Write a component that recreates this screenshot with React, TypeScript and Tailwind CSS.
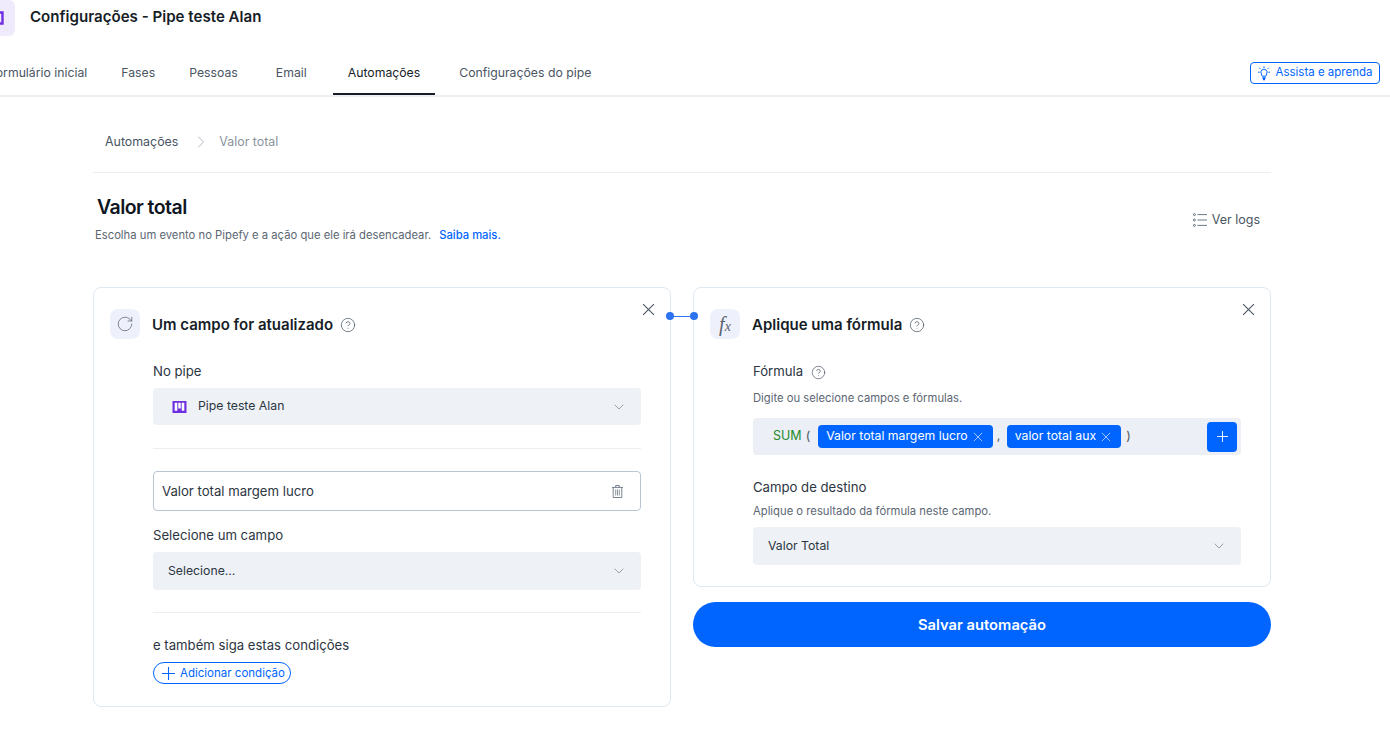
import { ChevronDown, ChevronRight, CircleHelp, RotateCw } from "lucide-react";

const tabs = [
  { label: "Formulário inicial", className: "px-[15px] mr-[4px]" },
  { label: "Fases", className: "px-[15px] mr-[4px]" },
  { label: "Pessoas", className: "px-[15px] mr-[8px]" },
  { label: "Email", className: "px-[15px] mr-[11px]" },
  { label: "Automações", className: "px-[15px] mr-[9px] text-[#161d27] border-b-2 border-[#161d27]" },
  { label: "Configurações do pipe", className: "px-[15px]" },
];

function PipeGlyph({ className }: { className: string }) {
  return (
    <svg viewBox="0 0 14 12" className={className}>
      <path fill="#6f2fe0" d="M0 0h14v12H0z" />
      <path fill="#fff" d="M2.2 1.8h2.6v8H2.2zM5.8 1.8h2.4v5.6H5.8zM9.2 1.8h2.6v8H9.2z" />
    </svg>
  );
}

function LogsIcon() {
  return (
    <svg viewBox="0 0 14 14" className="w-[14px] h-[14px] text-[#4a5563]" fill="none" stroke="currentColor" strokeWidth="0.8">
      <circle cx="1.4" cy="1.6" r="1" />
      <circle cx="1.4" cy="7" r="1" />
      <circle cx="1.4" cy="12.4" r="1" />
      <path d="M4.5 1.6H14M4.5 7H14M4.5 12.4H14" />
    </svg>
  );
}

function BulbIcon() {
  return (
    <svg viewBox="0 0 14 15" className="w-[14px] h-[15px] mr-[4px]" fill="none" stroke="currentColor" strokeWidth="1">
      <path d="M5.2 10.2 4.4 8a3.1 3.1 0 1 1 5.2 0L8.8 10.2Z" />
      <path d="M5.4 11.9h3.2M6 13.6h2" strokeWidth="1.5" />
      <path d="M7 .4v1.6M2.3 1.8l1.1 1.1M11.7 1.8l-1.1 1.1M1 6.2h1.6M11.4 6.2H13" />
    </svg>
  );
}

function TrashIcon() {
  return (
    <svg viewBox="0 0 11 13" className="w-[11px] h-[13px] text-[#6b7683]" fill="none" stroke="currentColor" strokeWidth="0.9">
      <path d="M0 2.4h11M3.7 2.4V.5h3.6v1.9M1.2 2.4v10.1h8.6V2.4" />
      <path d="M3.7 4.5v6M5.5 4.5v6M7.3 4.5v6" strokeWidth="0.8" />
    </svg>
  );
}

function CrossIcon({ className }: { className: string }) {
  return (
    <svg viewBox="0 0 12 12" className={className} fill="none" stroke="currentColor" strokeWidth="1">
      <path d="M1 1l10 10M11 1 1 11" />
    </svg>
  );
}

function PlusIcon({ className }: { className: string }) {
  return (
    <svg viewBox="0 0 12 12" className={className} fill="none" stroke="currentColor" strokeWidth="1">
      <path d="M6 0v12M0 6h12" />
    </svg>
  );
}

function SelectBox({ children, height }: { children: React.ReactNode; height: string }) {
  return (
    <div className={height + " rounded bg-[#eef1f6] flex items-center justify-between pl-[15px] pr-[14px] text-[12.25px] text-[#2c3542]"}>
      <div className="flex items-center">{children}</div>
      <ChevronDown className="w-[16px] h-[16px] text-[#6b7683]" strokeWidth={1} />
    </div>
  );
}

function CardHeader({ icon, title }: { icon: React.ReactNode; title: string }) {
  return (
    <div className="flex items-center">
      <div className="w-[30px] h-[30px] rounded-lg bg-[#eef1fc] flex items-center justify-center text-[#59636f]">{icon}</div>
      <h2 className="ml-[12px] pt-[2px] text-[15px] font-semibold text-[#161d27]">{title}</h2>
      <CircleHelp className="ml-[7px] mt-[2px] w-[16px] h-[16px] text-[#4a5563]" strokeWidth={1.1} />
    </div>
  );
}

function Chip({ label }: { label: string }) {
  return (
    <span className="h-[23px] rounded bg-[#0065ff] text-white text-[12.25px] flex items-center pl-[8px] pr-[10px]">
      {label}
      <CrossIcon className="ml-[5px] w-[10px] h-[10px] text-[#bcd6ff]" />
    </span>
  );
}

export default function App() {
  return (
    <div className="w-[1390px] h-[753px] overflow-hidden bg-white text-[#161d27] font-['Inter',sans-serif]">
      {/* Header */}
      <header className="h-[97px] border-b-2 border-[#eceef1] flex flex-col">
        <div className="flex h-[36px]">
          <div className="w-[36px] h-[36px] -ml-[21px] rounded-md bg-[#f0ebfc] flex items-center justify-center">
            <svg viewBox="0 0 14 14" className="w-[14px] h-[14px]" fill="none" stroke="#6f2fe0" strokeWidth="2.4">
              <path d="M1.5 1.5h11v11h-11z" />
            </svg>
          </div>
          <h1 className="ml-[15px] mt-[7px] text-[15.1px] leading-[20px] font-semibold">Configurações - Pipe teste Alan</h1>
        </div>
        <div className="flex items-end justify-between mt-auto">
          <nav className="flex items-center -ml-[26px] text-[12.25px] text-[#4a5563]">
            {tabs.map((tab) => (
              <a key={tab.label} className={"h-[47px] pt-[17px] leading-[16px] " + tab.className}>
                {tab.label}
              </a>
            ))}
          </nav>
          <button className="mr-[10px] mb-[11px] w-[130px] h-[22px] rounded border border-[#0065ff] text-[#0065ff] text-[11.5px] flex items-center justify-center">
            <BulbIcon />
            Assista e aprenda
          </button>
        </div>
      </header>

      <main className="w-[1178px] ml-[93px]">
        {/* Breadcrumb */}
        <div className="h-[76px] border-b border-[#eceef1] flex items-center pl-[12px] pt-[15px] text-[12.4px]">
          <span className="text-[#4a5563]">Automações</span>
          <ChevronRight className="ml-[13px] mr-[8px] w-[20px] h-[20px] text-[#9aa3ad]" strokeWidth={0.9} />
          <span className="text-[#8a939d]">Valor total</span>
        </div>

        {/* Title */}
        <div className="h-[114px] flex justify-between">
          <div>
            <h1 className="ml-[4px] mt-[22px] text-[19.5px] leading-[24px] font-semibold tracking-[-0.55px] text-[#10161f]">Valor total</h1>
            <p className="ml-[2px] mt-[9px] text-[11.25px] leading-[14px] text-[#5c6673]">
              Escolha um evento no Pipefy e a ação que ele irá desencadear.
              <a className="ml-[8px] text-[#0065ff] font-medium">Saiba mais.</a>
            </p>
          </div>
          <div className="mr-[11px] mt-[39px] h-[16px] flex items-center text-[12.5px] text-[#4a5563]">
            <LogsIcon />
            <span className="ml-[5px]">Ver logs</span>
          </div>
        </div>

        <div className="relative flex items-start justify-between">
          {/* Trigger card */}
          <section className="relative w-[578px] h-[420px] border border-[#dfe9f1] rounded-lg pl-[16px] pr-[29px] pt-[21px]">
            <CrossIcon className="absolute right-[15px] top-[15px] w-[13px] h-[13px] text-[#4a5563]" />
            <CardHeader icon={<RotateCw className="w-[18px] h-[18px]" strokeWidth={1} />} title="Um campo for atualizado" />
            <div className="ml-[43px] mt-[22px]">
              <label className="block text-[13.15px] leading-[20px] text-[#2c3542] mb-[7px]">No pipe</label>
              <SelectBox height="h-[37px]">
                <PipeGlyph className="ml-[4px] w-[15px] h-[12px] mr-[11px]" />
                Pipe teste Alan
              </SelectBox>
              <div className="h-px bg-[#eceef1] mt-[23px] mb-[22px]" />
              <div className="h-[40px] rounded border border-[#b8c4d2] flex items-center justify-between pl-[8px] pr-[17px] pt-px text-[13.15px] text-[#2c3542]">
                Valor total margem lucro
                <TrashIcon />
              </div>
              <label className="block mt-[14px] mb-[7px] text-[13.15px] leading-[20px] text-[#2c3542]">Selecione um campo</label>
              <SelectBox height="h-[38px]">Selecione...</SelectBox>
              <div className="h-px bg-[#eceef1] mt-[22px] mb-[22px]" />
              <p className="text-[13.15px] leading-[20px] text-[#2c3542]">e também siga estas condições</p>
              <button className="mt-[7px] w-[138px] h-[22px] rounded-full border border-[#0065ff] text-[#0065ff] text-[11.5px] flex items-center pl-[8px] pt-px">
                <PlusIcon className="w-[13px] h-[13px] mr-[5px]" />
                Adicionar condição
              </button>
            </div>
          </section>

          {/* Action column */}
          <div className="w-[578px]">
            <section className="relative h-[300px] border border-[#dfe9f1] rounded-lg pl-[16px] pr-[29px] pt-[21px]">
              <CrossIcon className="absolute right-[15px] top-[15px] w-[13px] h-[13px] text-[#4a5563]" />
              <CardHeader
                icon={
                  <span className="font-['Liberation_Serif',serif] italic leading-none">
                    <span className="text-[20px]">f</span>
                    <span className="text-[14px]">x</span>
                  </span>
                }
                title="Aplique uma fórmula"
              />
              <div className="ml-[43px] mt-[23px]">
                <div className="flex items-center h-[20px]">
                  <label className="text-[13.15px] text-[#2c3542]">Fórmula</label>
                  <CircleHelp className="ml-[8px] w-[15px] h-[15px] text-[#4a5563]" strokeWidth={1.1} />
                </div>
                <p className="mt-[9px] text-[11.25px] leading-[14px] text-[#5c6673]">Digite ou selecione campos e fórmulas.</p>
                <div className="mt-[13px] h-[37px] rounded bg-[#eceff5] flex items-center pl-[20px] pr-[4px] text-[12.5px]">
                  <span className="text-[#1f8a2e]">SUM</span>
                  <span className="ml-[4px] mr-[8px] text-[#4a5563]">(</span>
                  <Chip label="Valor total margem lucro" />
                  <span className="mx-[4px] w-[6px] text-[#4a5563]">,</span>
                  <Chip label="valor total aux" />
                  <span className="ml-[5px] text-[#4a5563]">)</span>
                  <button className="ml-auto w-[30px] h-[30px] rounded bg-[#0065ff] flex items-center justify-center">
                    <PlusIcon className="w-[11px] h-[11px] text-white" />
                  </button>
                </div>
                <label className="block mt-[22px] text-[13.15px] leading-[20px] text-[#2c3542]">Campo de destino</label>
                <p className="mt-[7px] mb-[9px] text-[11.25px] leading-[14px] text-[#5c6673]">Aplique o resultado da fórmula neste campo.</p>
                <SelectBox height="h-[38px]">Valor Total</SelectBox>
              </div>
            </section>
            <button className="mt-[15px] w-full h-[45px] rounded-full bg-[#0065ff] pt-px text-white text-[14.75px] font-semibold">
              Salvar automação
            </button>
          </div>

          {/* Connector */}
          <div className="absolute left-[573px] top-[25px] w-[32px] flex items-center">
            <span className="w-[8px] h-[8px] rounded-full bg-[#2b73f0]" />
            <span className="flex-1 h-px bg-[#2b73f0]" />
            <span className="w-[8px] h-[8px] rounded-full bg-[#2b73f0]" />
          </div>
        </div>
      </main>
    </div>
  );
}
